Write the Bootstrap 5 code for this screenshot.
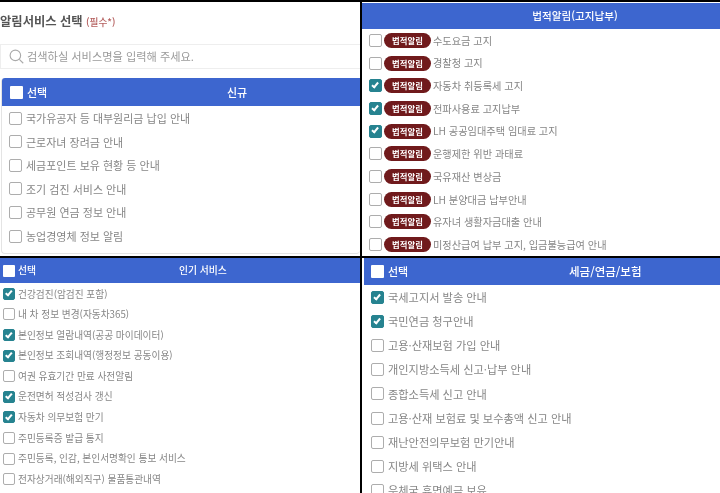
<!DOCTYPE html>
<html lang="ko">
<head>
<meta charset="utf-8">
<link href="https://cdn.jsdelivr.net/npm/bootstrap@5.3.0/dist/css/bootstrap.min.css" rel="stylesheet">
<style>
html,body{height:100%;margin:0;overflow:hidden;background:#000}
body{font-family:"Noto Sans CJK KR","Noto Sans",sans-serif;color:#868686;width:720px;height:493px}
.sheet{display:grid;grid-template-columns:360px 358px;grid-template-rows:254px 235px;column-gap:2px;row-gap:2px;padding-top:2px;height:493px;background:#000;filter:blur(.45px)}
.pane{background:#fff;overflow:hidden;min-width:0}
.pane-title{font-size:12.3px;font-weight:700;color:#555;height:42px;padding-top:9px;line-height:20px;margin:0}
.pane-title span{font-size:9.7px;font-weight:500;color:#b5605f}
.searchbox{height:25px;margin-bottom:9px;border:1px solid #eee;border-right:0;padding-left:8px;color:#9a9a9a;font-size:11.2px;line-height:23px}
.searchbox svg{width:15px;height:15px;margin-right:3px;flex:none}
.head-bar{background:#3d66cf;color:#fff;font-weight:500;display:flex;align-items:center;position:relative}
.head-bar .tick{background:#fff;border:0;border-radius:1px}
.tick{display:block;flex:none;border:1px solid #adadad;border-radius:2px;background:#fff;position:relative}
.tick.on{background:#268390;border-color:#268390}
.tick.on::after{content:"";position:absolute;left:30%;top:6%;width:36%;height:66%;border:solid #fff;border-width:0 2px 2px 0;transform:rotate(40deg)}
.head-label{position:absolute;text-align:center}
.rowline{display:flex;align-items:center;white-space:nowrap}
.q1-list{margin-left:1px;border-left:1px solid #e4e4e4;border-bottom:1px solid #e4e4e4;border-radius:4px;height:176px}
.q1 .head-bar{height:28.4px;font-size:11px;padding-left:8px;gap:4px;border-radius:3px 0 0 0}
.q1 .tick{width:13px;height:13px}
.q1 .head-label{left:225px;top:4px;line-height:20px}
.q1 .rowline{height:23.6px;padding-left:7px;gap:4px;font-size:11px}
.q2 .head-bar{height:26px;font-size:10.6px;justify-content:center;margin-top:1px;white-space:nowrap}
.q2 .head-bar span{margin-left:68px}
.q2 .rowlist{margin-left:7px}
.q2 .rowline{height:22.7px;gap:2px;font-size:10.2px}
.q2 .tick{width:13px;height:13px}
.tagpill{background:#701a1c;color:#fff;font-size:8.4px;font-weight:700;border-radius:8px;height:15px;line-height:15px;width:47px;text-align:center;display:block}
.q3 .head-bar{height:25px;font-size:9.8px;padding-left:3px;gap:3px}
.q3 .tick{width:12px;height:12px}
.q3 .head-label{left:179px;top:3px;line-height:18px}
.q3 .rowlist{padding-top:.5px;padding-left:3px}
.q3 .rowline{height:20.6px;gap:3px;font-size:9.7px}
.q4 .head-bar{height:27px;font-size:11px;padding-left:7px;gap:4px;margin-left:2px}
.q4 .tick{width:13px;height:13px}
.q4 .head-label{left:205px;top:3px;line-height:20px;font-size:11.5px}
.q4 .rowlist{padding-left:9px;padding-top:.5px}
.q4 .rowline{height:24.1px;gap:4px;font-size:11.2px}
</style>
</head>
<body>
<div class="sheet">
  <section class="pane q1">
    <h1 class="pane-title">알림서비스 선택 <span>(필수*)</span></h1>
    <div class="searchbox d-flex align-items-center">
      <svg viewBox="0 0 16 16" fill="none" stroke="#aaa" stroke-width="1.2"><circle cx="6.8" cy="6.8" r="5.6"/><path d="M11 11l4.2 4.2"/></svg>
      검색하실 서비스명을 입력해 주세요.
    </div>
    <div class="q1-list">
      <div class="head-bar"><i class="tick"></i>선택<span class="head-label">신규</span></div>
      <div class="rowline"><i class="tick"></i>국가유공자 등 대부원리금 납입 안내</div>
      <div class="rowline"><i class="tick"></i>근로자녀 장려금 안내</div>
      <div class="rowline"><i class="tick"></i>세금포인트 보유 현황 등 안내</div>
      <div class="rowline"><i class="tick"></i>조기 검진 서비스 안내</div>
      <div class="rowline"><i class="tick"></i>공무원 연금 정보 안내</div>
      <div class="rowline"><i class="tick"></i>농업경영체 정보 알림</div>
    </div>
  </section>
  <section class="pane q2">
    <div class="head-bar"><span>법적알림(고지납부)</span></div>
    <div class="rowlist">
      <div class="rowline"><i class="tick"></i><b class="tagpill">법적알림</b>수도요금 고지</div>
      <div class="rowline"><i class="tick"></i><b class="tagpill">법적알림</b>경찰청 고지</div>
      <div class="rowline"><i class="tick on"></i><b class="tagpill">법적알림</b>자동차 취등록세 고지</div>
      <div class="rowline"><i class="tick on"></i><b class="tagpill">법적알림</b>전파사용료 고지납부</div>
      <div class="rowline"><i class="tick on"></i><b class="tagpill">법적알림</b>LH 공공임대주택 임대료 고지</div>
      <div class="rowline"><i class="tick"></i><b class="tagpill">법적알림</b>운행제한 위반 과태료</div>
      <div class="rowline"><i class="tick"></i><b class="tagpill">법적알림</b>국유재산 변상금</div>
      <div class="rowline"><i class="tick"></i><b class="tagpill">법적알림</b>LH 분양대금 납부안내</div>
      <div class="rowline"><i class="tick"></i><b class="tagpill">법적알림</b>유자녀 생활자금대출 안내</div>
      <div class="rowline"><i class="tick"></i><b class="tagpill">법적알림</b>미정산급여 납부 고지, 입금불능급여 안내</div>
    </div>
  </section>
  <section class="pane q3">
    <div class="head-bar"><i class="tick"></i>선택<span class="head-label">인기 서비스</span></div>
    <div class="rowlist">
      <div class="rowline"><i class="tick on"></i>건강검진(암검진 포함)</div>
      <div class="rowline"><i class="tick"></i>내 차 정보 변경(자동차365)</div>
      <div class="rowline"><i class="tick on"></i>본인정보 열람내역(공공 마이데이터)</div>
      <div class="rowline"><i class="tick on"></i>본인정보 조회내역(행정정보 공동이용)</div>
      <div class="rowline"><i class="tick"></i>여권 유효기간 만료 사전알림</div>
      <div class="rowline"><i class="tick on"></i>운전면허 적성검사 갱신</div>
      <div class="rowline"><i class="tick on"></i>자동차 의무보험 만기</div>
      <div class="rowline"><i class="tick"></i>주민등록증 발급 통지</div>
      <div class="rowline"><i class="tick"></i>주민등록, 인감, 본인서명확인 통보 서비스</div>
      <div class="rowline"><i class="tick"></i>전자상거래(해외직구) 물품통관내역</div>
    </div>
  </section>
  <section class="pane q4">
    <div class="head-bar"><i class="tick"></i>선택<span class="head-label">세금/연금/보험</span></div>
    <div class="rowlist">
      <div class="rowline"><i class="tick on"></i>국세고지서 발송 안내</div>
      <div class="rowline"><i class="tick on"></i>국민연금 청구안내</div>
      <div class="rowline"><i class="tick"></i>고용·산재보험 가입 안내</div>
      <div class="rowline"><i class="tick"></i>개인지방소득세 신고·납부 안내</div>
      <div class="rowline"><i class="tick"></i>종합소득세 신고 안내</div>
      <div class="rowline"><i class="tick"></i>고용·산재 보험료 및 보수총액 신고 안내</div>
      <div class="rowline"><i class="tick"></i>재난안전의무보험 만기안내</div>
      <div class="rowline"><i class="tick"></i>지방세 위택스 안내</div>
      <div class="rowline"><i class="tick"></i>우체국 휴면예금 보유</div>
    </div>
  </section>
</div>
<script src="https://cdn.jsdelivr.net/npm/bootstrap@5.3.0/dist/js/bootstrap.bundle.min.js"></script>
</body>
</html>
